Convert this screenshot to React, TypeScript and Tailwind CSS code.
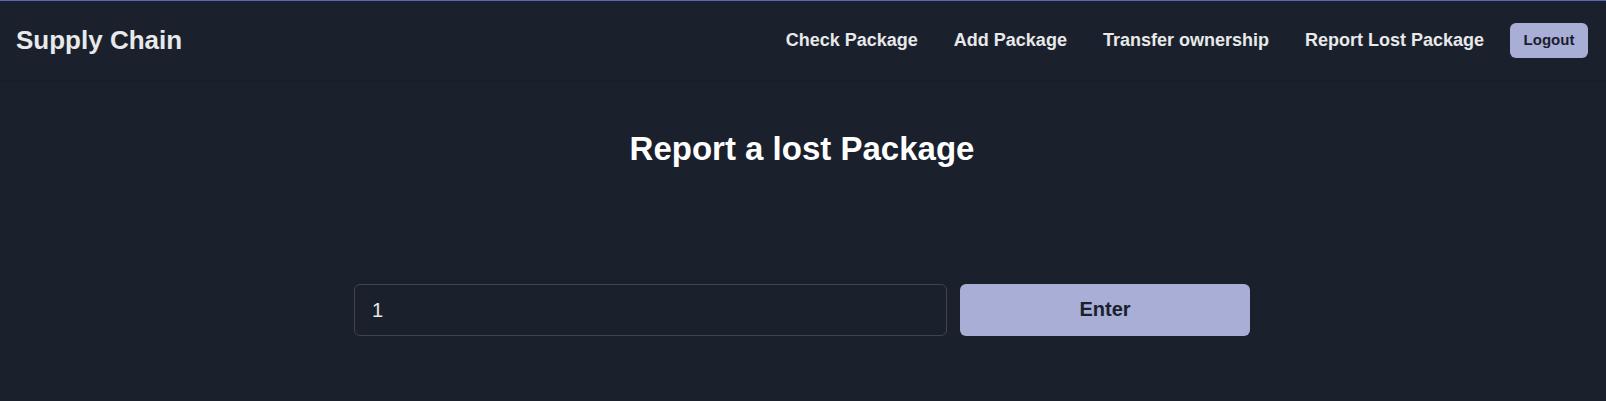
const links = ["Check Package", "Add Package", "Transfer ownership", "Report Lost Package"];

export default function App() {
  return (
    <div className="min-h-screen bg-[#1a202c] font-['Liberation_Sans',Arial,sans-serif] text-white">
      <header className="flex h-20 items-center justify-between border-t border-[#5a67b8] px-4 shadow-[0_1px_2px_rgba(0,0,0,0.08)]">
        <a href="#" className="text-[26px] font-bold text-white/90">Supply Chain</a>
        <nav className="flex items-center pr-0.5">
          <div className="mr-[26px] flex gap-9 pb-0.5">
            {links.map((label) => (
              <a key={label} href="#" className="text-lg font-bold text-white/90">{label}</a>
            ))}
          </div>
          <button type="button" className="h-[35px] w-[78px] rounded-md bg-[#a9aed6] text-[15px] font-bold text-[#1a202c]">Logout</button>
        </nav>
      </header>
      <main className="flex flex-col items-center pt-[49px] pr-[18px] pl-4">
        <h1 className="text-[33px] leading-10 font-bold">Report a lost Package</h1>
        <form className="mt-[115px] flex w-full max-w-[896px] gap-[13px]" onSubmit={(e) => e.preventDefault()}>
          <input aria-label="Package ID" defaultValue="1" className="h-[52px] min-w-0 flex-1 rounded-md border border-[#3f444e] bg-transparent px-[17px] text-xl text-white/90" />
          <button type="submit" className="h-[52px] w-[290px] rounded-md bg-[#a9aed6] pb-0.5 text-xl font-bold text-[#1a202c]">Enter</button>
        </form>
      </main>
    </div>
  );
}
